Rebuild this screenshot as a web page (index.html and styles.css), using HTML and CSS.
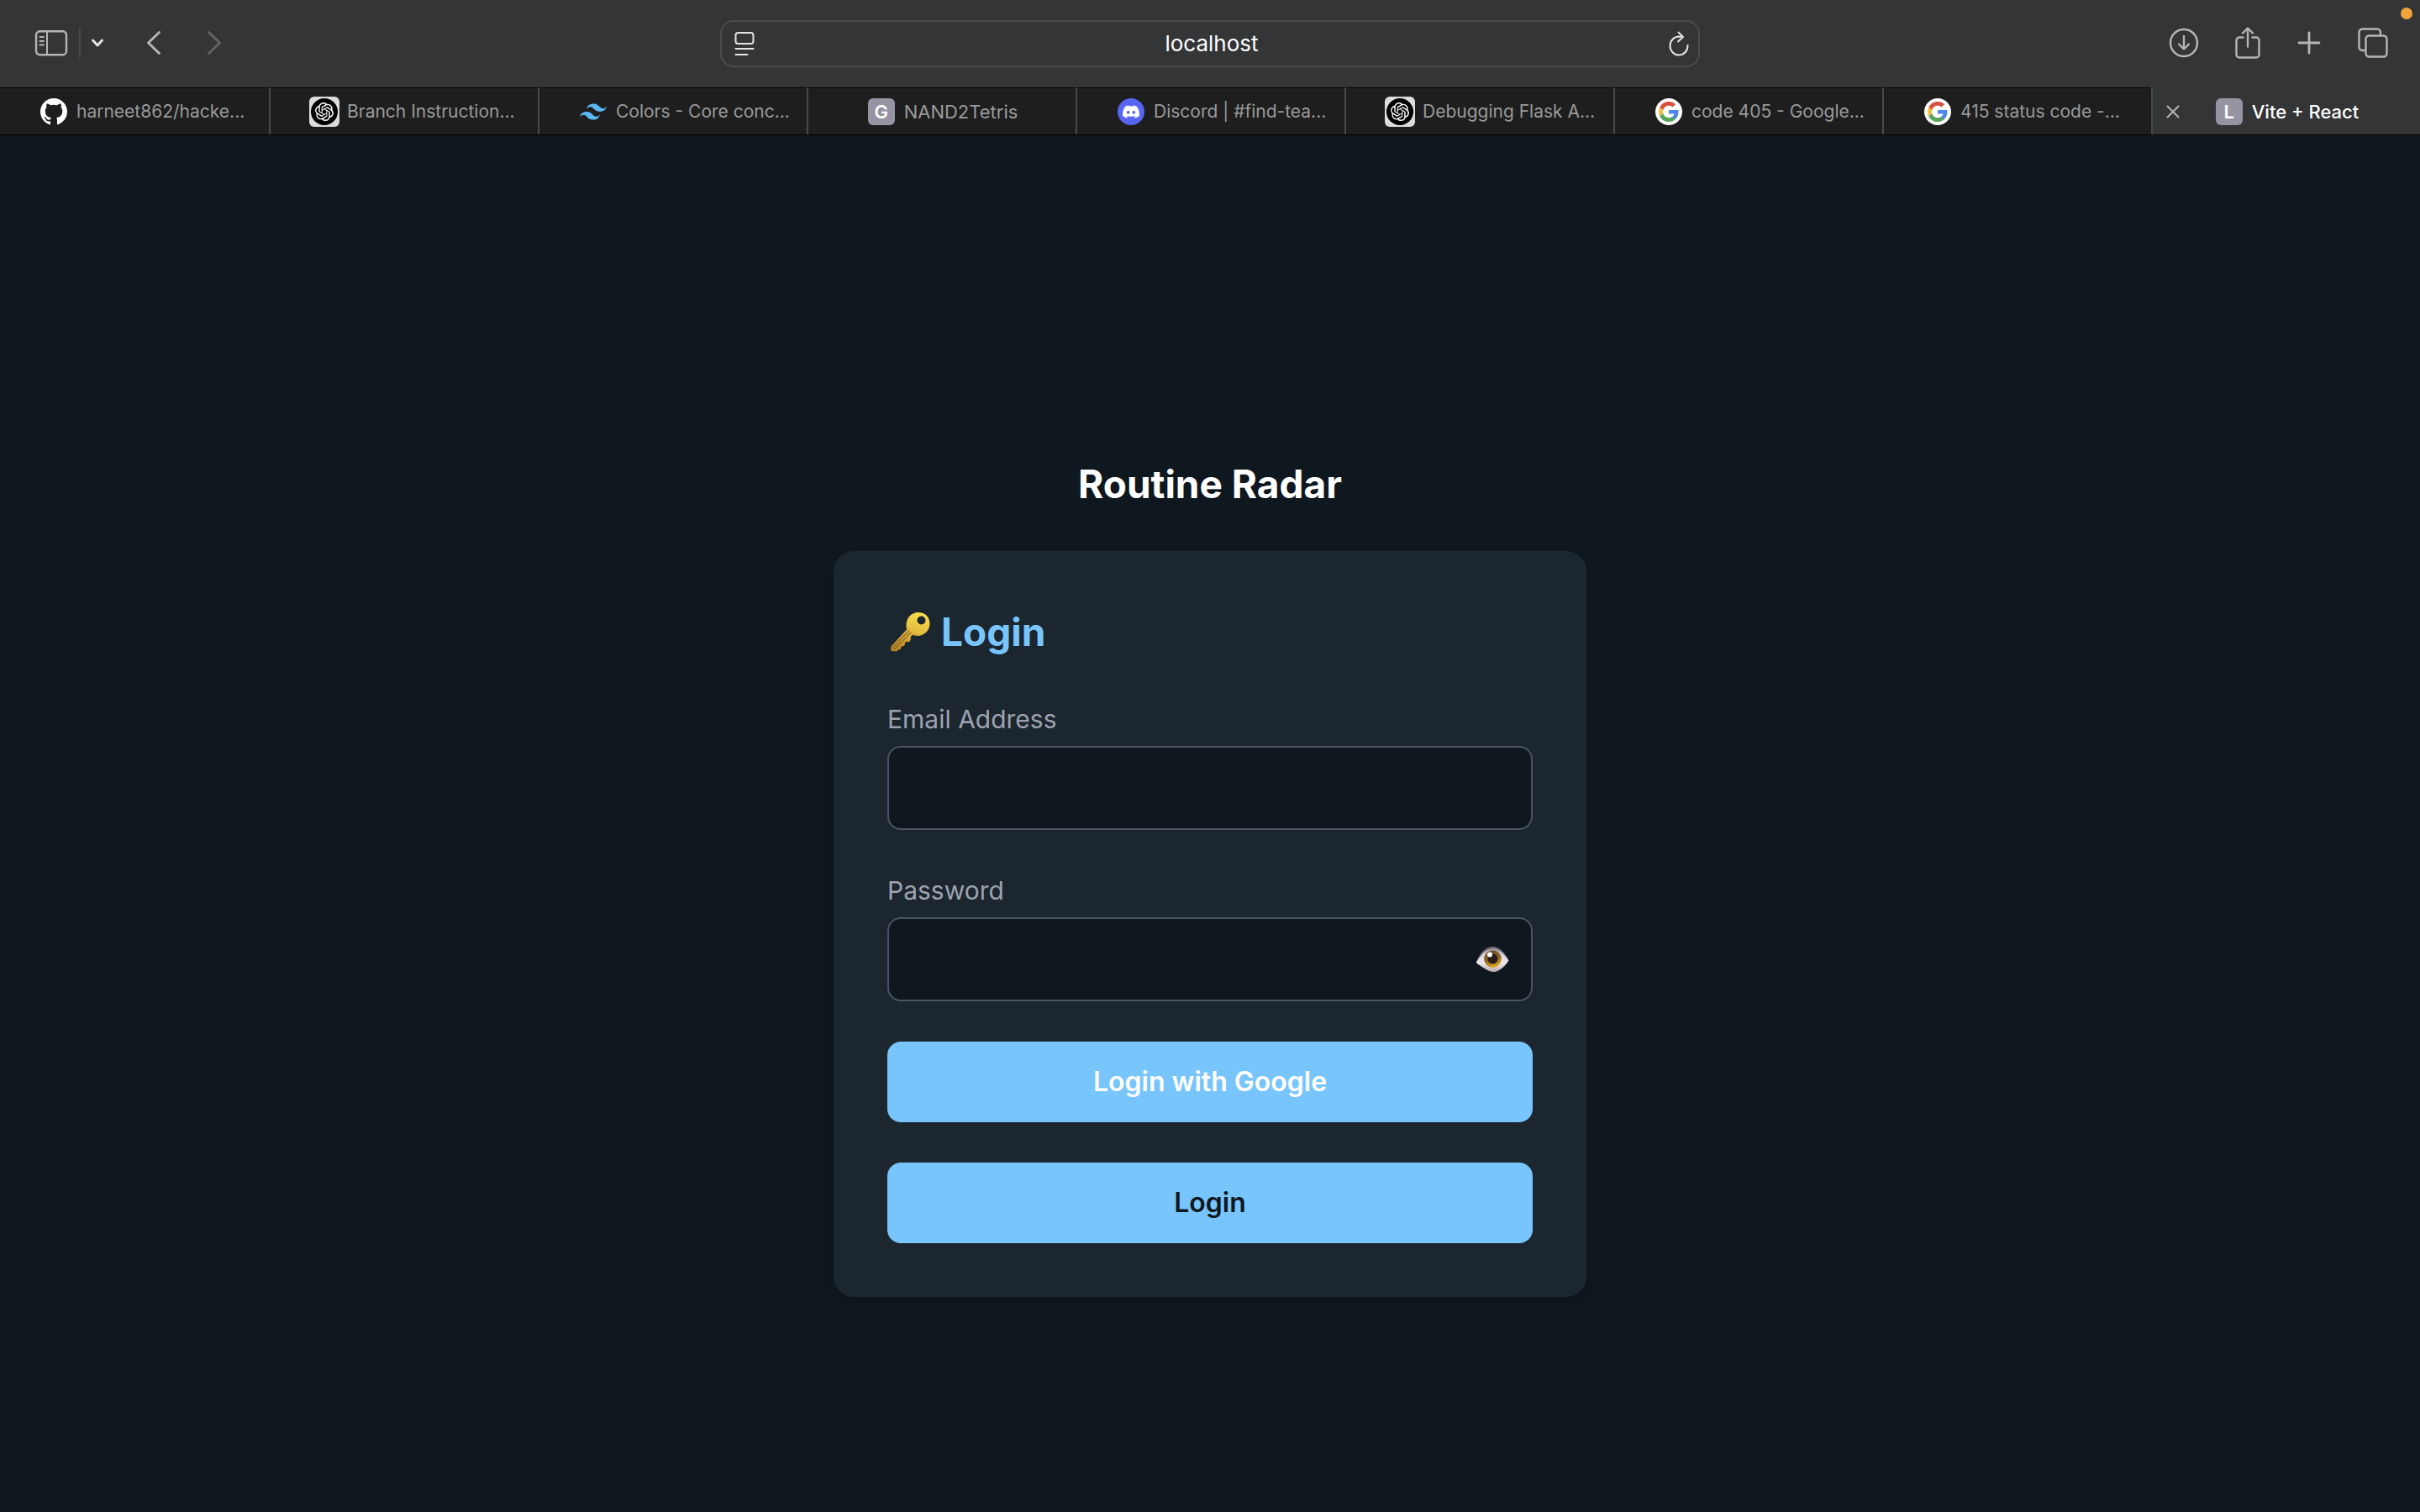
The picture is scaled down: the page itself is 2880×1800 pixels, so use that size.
FILE: index.html
```html
<!DOCTYPE html>
<html lang="en">
<head>
<meta charset="utf-8">
<meta name="viewport" content="width=device-width, initial-scale=1">
<title>Vite + React</title>
<link rel="stylesheet" href="styles.css">
</head>
<body>
<svg class="sprite" aria-hidden="true">
  <symbol id="openai" viewBox="0 0 36 36">
    <rect width="36" height="36" rx="6" fill="#dcdcdc"/>
    <circle cx="18" cy="18" r="16" fill="#000"/>
    <path transform="translate(7 7) scale(.917)" fill="#fff" d="M22.2819 9.8211a5.9847 5.9847 0 0 0-.5157-4.9108 6.0462 6.0462 0 0 0-6.5098-2.9A6.0651 6.0651 0 0 0 4.9807 4.1818a5.9847 5.9847 0 0 0-3.9977 2.9 6.0462 6.0462 0 0 0 .7427 7.0966 5.98 5.98 0 0 0 .511 4.9107 6.051 6.051 0 0 0 6.5146 2.9001A5.9847 5.9847 0 0 0 13.2599 24a6.0557 6.0557 0 0 0 5.7718-4.2058 5.9894 5.9894 0 0 0 3.9977-2.9001 6.0557 6.0557 0 0 0-.7475-7.0729zm-9.022 12.6081a4.4755 4.4755 0 0 1-2.8764-1.0408l.1419-.0804 4.7783-2.7582a.7948.7948 0 0 0 .3927-.6813v-6.7369l2.02 1.1686a.071.071 0 0 1 .038.052v5.5826a4.504 4.504 0 0 1-4.4945 4.4944zm-9.6607-4.1254a4.4708 4.4708 0 0 1-.5346-3.0137l.142.0852 4.783 2.7582a.7712.7712 0 0 0 .7806 0l5.8428-3.3685v2.3324a.0804.0804 0 0 1-.0332.0615L9.74 19.9502a4.4992 4.4992 0 0 1-6.1408-1.6464zM2.3408 7.8956a4.485 4.485 0 0 1 2.3655-1.9728V11.6a.7664.7664 0 0 0 .3879.6765l5.8144 3.3543-2.0201 1.1685a.0757.0757 0 0 1-.071 0l-4.8303-2.7865A4.504 4.504 0 0 1 2.3408 7.872zm16.5963 3.8558L13.1038 8.364 15.1192 7.2a.0757.0757 0 0 1 .071 0l4.8303 2.7913a4.4944 4.4944 0 0 1-.6765 8.1042v-5.6772a.79.79 0 0 0-.407-.667zm2.0107-3.0231l-.142-.0852-4.7735-2.7818a.7759.7759 0 0 0-.7854 0L9.409 9.2297V6.8974a.0662.0662 0 0 1 .0284-.0615l4.8303-2.7866a4.4992 4.4992 0 0 1 6.6802 4.66zM8.3065 12.863l-2.02-1.1638a.0804.0804 0 0 1-.038-.0567V6.0742a4.4992 4.4992 0 0 1 7.3757-3.4537l-.142.0805L8.704 5.459a.7948.7948 0 0 0-.3927.6813zm1.0976-2.3654l2.602-1.4998 2.6069 1.4998v2.9994l-2.5974 1.4997-2.6067-1.4997Z"/>
  </symbol>
  <symbol id="google" viewBox="0 0 32 32">
    <circle cx="16" cy="16" r="16" fill="#fff"/>
    <g transform="translate(4 4)">
      <path fill="#4f86ec" d="M23.49 12.27c0-.79-.07-1.54-.19-2.27H12v4.51h6.47c-.29 1.48-1.14 2.73-2.4 3.58v3h3.86c2.26-2.09 3.56-5.17 3.56-8.82z"/>
      <path fill="#58a55c" d="M12 24c3.24 0 5.95-1.08 7.93-2.91l-3.86-3c-1.08.72-2.45 1.16-4.07 1.16-3.13 0-5.78-2.11-6.73-4.96H1.29v3.09C3.26 21.3 7.31 24 12 24z"/>
      <path fill="#f1bf42" d="M5.27 14.29c-.25-.72-.38-1.49-.38-2.29s.14-1.57.38-2.29V6.62H1.29C.47 8.24 0 10.06 0 12s.47 3.76 1.29 5.38l3.98-3.09z"/>
      <path fill="#d85140" d="M12 4.75c1.77 0 3.35.61 4.6 1.8l3.42-3.42C17.95 1.19 15.24 0 12 0 7.31 0 3.26 2.7 1.29 6.62l3.98 3.09C6.22 6.86 8.87 4.75 12 4.75z"/>
    </g>
  </symbol>
</svg>

<header class="chrome">
  <div class="toolbar">
    <div class="tools tools-left">
      <button class="tool" aria-label="Show sidebar">
        <svg width="40" height="32" viewBox="0 0 40 32" fill="none" stroke="currentColor" stroke-width="2.4"><rect x="2" y="2.2" width="36" height="28" rx="4.5"/><path d="M15 2v28M6.500 9h4.500M6.500 14h4.500M6.500 18.500h4.500" stroke-linecap="round" stroke-width="2"/></svg>
      </button>
      <span class="tool-divider"></span>
      <button class="tool tool-bright" aria-label="Tab groups">
        <svg width="16" height="12" viewBox="0 0 16 12" fill="none" stroke="currentColor" stroke-width="3" stroke-linecap="round" stroke-linejoin="round"><path d="M2.500 3 8 9l5.500-6"/></svg>
      </button>
      <button class="tool tool-back" aria-label="Back">
        <svg width="18" height="30" viewBox="0 0 18 30" fill="none" stroke="currentColor" stroke-width="3" stroke-linecap="round" stroke-linejoin="round"><path d="M15.500 2.500 2.500 15l13 12.500"/></svg>
      </button>
      <button class="tool tool-forward" aria-label="Forward" disabled>
        <svg width="18" height="30" viewBox="0 0 18 30" fill="none" stroke="currentColor" stroke-width="3" stroke-linecap="round" stroke-linejoin="round"><path d="M2.500 2.500 15.500 15l-13 12.500"/></svg>
      </button>
    </div>

    <div class="address">
      <button class="tool tool-bright" aria-label="Page menu">
        <svg width="24" height="30" viewBox="0 0 24 30" fill="none" stroke="currentColor" stroke-width="2" stroke-linecap="round"><rect x="1.500" y="2" width="21" height="13" rx="3"/><path d="M1.500 21h21M1.500 28h14"/></svg>
      </button>
      <input class="address-input" type="text" value="localhost" aria-label="Address">
      <button class="tool tool-bright" aria-label="Reload">
        <svg width="24" height="30" viewBox="0 0 24 30" fill="none" stroke="currentColor" stroke-width="2" stroke-linecap="round" stroke-linejoin="round"><path d="M22.500 17A10.500 11 0 1 1 12 6.500l5 .5M11.500 1.500l5.500 5.500-6 5.500"/></svg>
      </button>
    </div>

    <div class="tools tools-right">
      <button class="tool" aria-label="Downloads">
        <svg width="36" height="36" viewBox="0 0 36 36" fill="none" stroke="currentColor" stroke-width="2.400" stroke-linecap="round" stroke-linejoin="round"><circle cx="18" cy="18" r="16"/><path d="M18 10v15M12 19.500l6 6 6-6"/></svg>
      </button>
      <button class="tool" aria-label="Share">
        <svg width="30" height="40" viewBox="0 0 30 40" fill="none" stroke="currentColor" stroke-width="2.400" stroke-linecap="round" stroke-linejoin="round"><path d="M9.500 13.500H5A3.500 3.500 0 0 0 1.500 17v17A3.500 3.500 0 0 0 5 37.500h20a3.500 3.500 0 0 0 3.500-3.500V17a3.500 3.500 0 0 0-3.500-3.500h-4.500M15 24.500V2.500M9 8.500l6-6 6 6"/></svg>
      </button>
      <button class="tool" aria-label="New tab">
        <svg width="30" height="30" viewBox="0 0 30 30" fill="none" stroke="currentColor" stroke-width="2.800" stroke-linecap="round"><path d="M15 3v24M3 15h24"/></svg>
      </button>
      <button class="tool" aria-label="Tab overview">
        <svg width="36" height="36" viewBox="0 0 36 36" fill="none" stroke="currentColor" stroke-width="2.400" stroke-linejoin="round"><rect x="9.500" y="9.500" width="25" height="25" rx="4"/><path d="M9 27H5.500a4 4 0 0 1-4-4V5.500a4 4 0 0 1 4-4H23a4 4 0 0 1 4 4V9"/></svg>
      </button>
    </div>
    <span class="capture-dot"></span>
  </div>

  <nav class="tabs" aria-label="Open tabs">
    <a class="tab" href="#">
      <svg class="favicon" viewBox="0 0 16 16" fill="#fff"><path d="M8 0C3.580 0 0 3.580 0 8c0 3.540 2.290 6.530 5.470 7.590.4.070.55-.17.55-.38 0-.19-.010-.82-.010-1.490-2.010.37-2.530-.49-2.690-.94-.090-.23-.48-.94-.82-1.130-.28-.15-.68-.52-.010-.53.63-.010 1.080.58 1.230.82.72 1.210 1.870.87 2.330.66.070-.52.28-.87.510-1.070-1.780-.2-3.640-.89-3.640-3.950 0-.87.310-1.590.82-2.150-.080-.2-.36-1.020.080-2.120 0 0 .67-.21 2.200.82.64-.18 1.320-.27 2-.27s1.360.090 2 .27c1.530-1.040 2.200-.82 2.200-.82.44 1.100.16 1.920.080 2.120.510.56.82 1.270.82 2.150 0 3.070-1.870 3.750-3.650 3.950.29.25.54.73.54 1.480 0 1.070-.010 1.930-.010 2.200 0 .21.15.46.55.38A8.010 8.010 0 0 0 16 8c0-4.420-3.580-8-8-8z"/></svg>
      <span class="tab-title">harneet862/hacke...</span>
    </a>
    <a class="tab" href="#">
      <svg class="favicon favicon-wide"><use href="#openai"/></svg>
      <span class="tab-title">Branch Instruction...</span>
    </a>
    <a class="tab" href="#">
      <svg class="favicon" viewBox="0 0 24 24" fill="#5cb8f5"><path d="M12 4.800c-3.200 0-5.200 1.600-6 4.800 1.200-1.600 2.600-2.200 4.200-1.800.913.228 1.565.89 2.288 1.624C13.666 10.618 15.027 12 18 12c3.200 0 5.200-1.600 6-4.800-1.200 1.600-2.600 2.200-4.200 1.800-.913-.228-1.565-.89-2.288-1.624C16.337 6.182 14.976 4.800 12 4.800zM6 12c-3.200 0-5.200 1.600-6 4.800 1.200-1.600 2.600-2.200 4.200-1.800.913.228 1.565.89 2.288 1.624C7.666 17.818 9.027 19.200 12 19.200c3.200 0 5.200-1.600 6-4.800-1.200 1.600-2.600 2.200-4.200 1.800-.913-.228-1.565-.89-2.288-1.624C10.337 13.382 8.976 12 6 12z"/></svg>
      <span class="tab-title">Colors - Core conc...</span>
    </a>
    <a class="tab tab-centered" href="#">
      <span class="favicon favicon-letter">G</span>
      <span class="tab-title">NAND2Tetris</span>
    </a>
    <a class="tab" href="#">
      <svg class="favicon" viewBox="0 0 32 32"><circle cx="16" cy="16" r="16" fill="#5865f2"/><path transform="translate(6 6) scale(.833)" fill="#fff" d="M20.317 4.370a19.791 19.791 0 0 0-4.885-1.515.074.074 0 0 0-.079.037c-.21.375-.444.865-.608 1.250a18.270 18.270 0 0 0-5.487 0 12.640 12.640 0 0 0-.618-1.250.077.077 0 0 0-.079-.037A19.736 19.736 0 0 0 3.677 4.370a.070.070 0 0 0-.032.028C.533 9.046-.319 13.580.099 18.058a.082.082 0 0 0 .031.056 19.900 19.900 0 0 0 5.993 3.030.078.078 0 0 0 .084-.028 14.090 14.090 0 0 0 1.226-1.994.076.076 0 0 0-.042-.106 13.107 13.107 0 0 1-1.872-.892.077.077 0 0 1-.008-.128 10.200 10.200 0 0 0 .372-.292.074.074 0 0 1 .078-.010c3.928 1.793 8.180 1.793 12.062 0a.074.074 0 0 1 .079.009c.120.099.246.199.373.293a.077.077 0 0 1-.006.127 12.299 12.299 0 0 1-1.873.892.077.077 0 0 0-.041.107c.36.698.772 1.362 1.225 1.993a.076.076 0 0 0 .084.029 19.839 19.839 0 0 0 6.002-3.030.077.077 0 0 0 .032-.055c.5-5.177-.838-9.674-3.549-13.660a.061.061 0 0 0-.031-.029zM8.020 15.331c-1.183 0-2.157-1.086-2.157-2.419s.956-2.419 2.157-2.419c1.210 0 2.176 1.095 2.157 2.419 0 1.333-.956 2.419-2.157 2.419zm7.975 0c-1.183 0-2.157-1.086-2.157-2.419s.955-2.419 2.157-2.419c1.210 0 2.176 1.095 2.157 2.419 0 1.333-.946 2.419-2.157 2.419z"/></svg>
      <span class="tab-title">Discord | #find-tea...</span>
    </a>
    <a class="tab" href="#">
      <svg class="favicon favicon-wide"><use href="#openai"/></svg>
      <span class="tab-title">Debugging Flask A...</span>
    </a>
    <a class="tab" href="#">
      <svg class="favicon"><use href="#google"/></svg>
      <span class="tab-title">code 405 - Google...</span>
    </a>
    <a class="tab" href="#">
      <svg class="favicon"><use href="#google"/></svg>
      <span class="tab-title">415 status code -...</span>
    </a>
    <a class="tab tab-centered tab-active" href="#" aria-current="page">
      <svg class="tab-close" viewBox="0 0 16 16" fill="none" stroke="currentColor" stroke-width="2" stroke-linecap="round"><path d="M1.500 1.500l13 13M14.500 1.500l-13 13"/></svg>
      <span class="favicon favicon-letter">L</span>
      <span class="tab-title">Vite + React</span>
    </a>
  </nav>
</header>

<main class="page">
  <h1 class="brand">Routine Radar</h1>
  <form class="card" onsubmit="return false">
    <h2 class="card-title">
      <svg class="key" viewBox="0 0 48 48" aria-hidden="true">
        <defs><linearGradient id="gold" x1="0.6" y1="0" x2="0.3" y2="1"><stop offset="0" stop-color="#f7dc4b"/><stop offset=".55" stop-color="#dfb43c"/><stop offset="1" stop-color="#b8842a"/></linearGradient></defs>
        <path fill="url(#gold)" fill-rule="evenodd" d="M34 1c8 0 13.500 5.500 13.500 13.500S41 29 33 29c-2.500 0-4.500-.5-6-1.200l-2 2-.5 4.200-1.500 2.200-4.500-.2-.5 3-1.500 2.300-3 .2-.8 3.500-2.700.4L8.500 47.500 1.500 47 1 42l19-20.500C17.500 10 24 1 34 1zM37.500 5.500a5 5 0 1 0 0 10 5 5 0 0 0 0-10z"/>
        <path d="M2.500 43.500 22.500 23M5 45l20-20" fill="none" stroke="#8f6420" stroke-width="1.300"/>
        <path d="M21.500 20c2 4.500 6.500 7.500 12 7.500" fill="none" stroke="#c69a30" stroke-width="1"/>
      </svg>
      <span>Login</span>
    </h2>
    <div class="field">
      <label class="field-label" for="email">Email Address</label>
      <input class="field-input" id="email" type="email">
    </div>
    <div class="field">
      <label class="field-label" for="password">Password</label>
      <div class="field-control">
        <input class="field-input" id="password" type="password">
        <button class="reveal" type="button" aria-label="Show password">
          <svg width="40" height="32" viewBox="0 0 40 32">
            <defs>
              <linearGradient id="white" x1="0" y1="0" x2="0" y2="1"><stop offset="0" stop-color="#8b8790"/><stop offset=".3" stop-color="#d9d5dc"/><stop offset=".65" stop-color="#eee8ea"/><stop offset="1" stop-color="#b7a9aa"/></linearGradient>
              <linearGradient id="iris" x1="0.3" y1="0" x2="0.6" y2="1"><stop offset="0" stop-color="#6b5030"/><stop offset=".5" stop-color="#8c6222"/><stop offset="1" stop-color="#e0b01c"/></linearGradient>
            </defs>
            <path d="M1 19.500C6 7 13 1.200 20.500 1.200S34 7 39.500 17.500C33 27 27 31 21.500 31S9 26 1 20.500z" fill="url(#white)"/>
            <path d="M1 19.500C6 7 13 1.200 20.500 1.200S34 7 39.500 17.500C33 8 27 3.200 20.500 3.200S8 8 1 19.500z" fill="#6a6570"/>
            <circle cx="20.500" cy="15.500" r="10.300" fill="url(#iris)"/>
            <circle cx="20.500" cy="15.500" r="6" fill="#2c1b1d"/>
            <circle cx="17" cy="10.500" r="3" fill="#fff"/>
          </svg>
        </button>
      </div>
    </div>
    <button class="action action-google" type="button">Login with Google</button>
    <button class="action" type="submit">Login</button>
  </form>
</main>
</body>
</html>
```
FILE: styles.css
```css
*, *::before, *::after { box-sizing: border-box; }

body {
  margin: 0;
  min-height: 100vh;
  display: flex;
  flex-direction: column;
  background: #0f171f;
  color: #fff;
  font-family: Inter, "Liberation Sans", sans-serif;
}

button {
  margin: 0;
  padding: 0;
  border: 0;
  background: none;
  font: inherit;
}

svg { display: block; flex: none; }
.sprite { position: absolute; width: 0; height: 0; }

/* Browser toolbar */
.chrome { background: #343537; }

.toolbar {
  position: relative;
  display: grid;
  grid-template-columns: 1fr minmax(0, 1166px) 1fr;
  align-items: center;
  height: 104px;
}

.tools { display: flex; align-items: center; padding-bottom: 2px; }
.tools-left { padding-left: 41px; }
.tools-right { justify-content: flex-end; gap: 43px; padding-right: 38px; }

.tool { color: #b4b5b6; }
.tool-bright { color: #e4e5e5; }
.tool-back { margin-left: 50px; }
.tool-forward { margin-left: 54px; color: #626365; }

.tool-divider {
  width: 2px;
  height: 36px;
  margin: 0 12px 0 13px;
  background: #48494b;
}

.address {
  display: flex;
  align-items: center;
  height: 56px;
  padding: 0 11px 0 15px;
  border: 2px solid #4b4c4e;
  border-radius: 16px;
}

.address-input {
  flex: 1;
  min-width: 0;
  padding: 0;
  border: 0;
  outline: 0;
  background: none;
  color: #fff;
  font: 400 26px/32px Inter, "Liberation Sans", sans-serif;
  text-align: center;
}

.capture-dot {
  position: absolute;
  top: 9px;
  right: 9px;
  width: 14px;
  height: 14px;
  border-radius: 50%;
  background: #f2a33c;
}

/* Tab strip */
.tabs {
  display: grid;
  grid-template-columns: repeat(9, minmax(0, 1fr));
  height: 57px;
  border-bottom: 1px solid #000;
}

.tab {
  position: relative;
  display: flex;
  align-items: center;
  gap: 9px;
  min-width: 0;
  padding-left: 46px;
  border-top: 1px solid #000;
  background: #1e1e1e;
  color: #9a9a9a;
  font-size: 21px;
  line-height: 28px;
  text-decoration: none;
  white-space: nowrap;
}

.tab + .tab { border-left: 2px solid #48494a; }
.tab + .tab-centered { justify-content: center; padding-left: 0; font-size: 22px; }
.tab + .tab-active {
  border-top-color: #343537;
  background: #343537;
  color: #fff;
  font-weight: 500;
}

.favicon { flex: none; width: 32px; height: 32px; margin: 0 2px; }
.favicon-wide { width: 36px; height: 36px; margin: 0; }

.favicon-letter {
  border-radius: 6px;
  background: #9694a2;
  color: #fff;
  font-size: 22px;
  font-weight: 600;
  line-height: 32px;
  text-align: center;
}

.tab-close {
  position: absolute;
  left: 16px;
  width: 16px;
  height: 16px;
  color: #b4b5b6;
}

/* Login page */
.page {
  flex: 1;
  display: flex;
  flex-direction: column;
  align-items: center;
  justify-content: center;
  gap: 48px;
  padding-top: 126px;
}

.brand, .card-title {
  margin: 0;
  font-size: 46px;
  font-weight: 700;
  line-height: 64px;
}

.card {
  display: flex;
  flex-direction: column;
  gap: 48px;
  width: 100%;
  max-width: 896px;
  padding: 64px;
  border-radius: 24px;
  background: #1c262f;
  box-shadow: 0 8px 16px rgba(0, 0, 0, 0.12);
}

.card-title {
  display: flex;
  align-items: center;
  gap: 13px;
  color: #78c5fb;
}

.key { width: 48px; height: 48px; margin-left: 3px; }

.field { display: flex; flex-direction: column; gap: 8px; }

.field-label {
  color: #9ca3af;
  font-size: 30px;
  line-height: 48px;
}

.field-control { position: relative; }

.field-input {
  display: block;
  width: 100%;
  height: 100px;
  padding: 24px 32px;
  border: 2px solid #4b5563;
  border-radius: 16px;
  outline: 0;
  background: #0f171f;
  color: #fff;
  font: 400 32px/48px Inter, "Liberation Sans", sans-serif;
}

.reveal {
  position: absolute;
  top: 34px;
  right: 28px;
}

.action {
  height: 96px;
  border-radius: 16px;
  background: #78c5fb;
  color: #0f171f;
  font-size: 32px;
  font-weight: 600;
  line-height: 48px;
}

.action-google { color: #fff; }
```
